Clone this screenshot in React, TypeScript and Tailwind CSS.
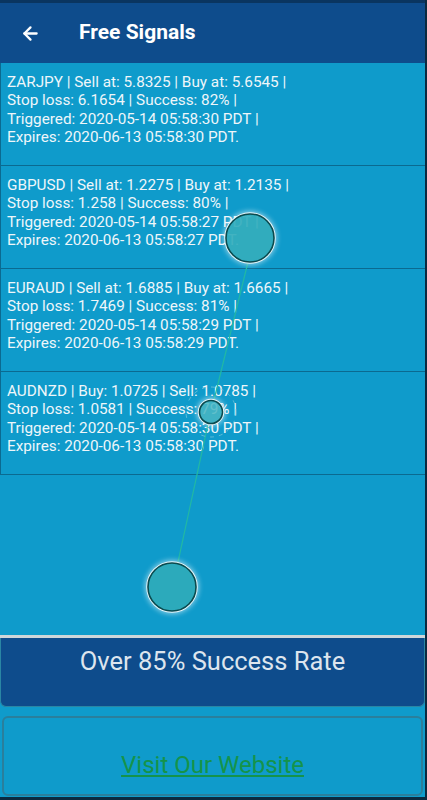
import React from "react";
import { ArrowLeft } from "lucide-react";

const signals = [
  [
    "ZARJPY | Sell at: 5.8325 | Buy at: 5.6545 |",
    "Stop loss: 6.1654 | Success: 82% |",
    "Triggered: 2020-05-14 05:58:30 PDT |",
    "Expires: 2020-06-13 05:58:30 PDT.",
  ],
  [
    "GBPUSD | Sell at: 1.2275 | Buy at: 1.2135 |",
    "Stop loss: 1.258 | Success: 80% |",
    "Triggered: 2020-05-14 05:58:27 PDT |",
    "Expires: 2020-06-13 05:58:27 PDT.",
  ],
  [
    "EURAUD | Sell at: 1.6885 | Buy at: 1.6665 |",
    "Stop loss: 1.7469 | Success: 81% |",
    "Triggered: 2020-05-14 05:58:29 PDT |",
    "Expires: 2020-06-13 05:58:29 PDT.",
  ],
  [
    "AUDNZD | Buy: 1.0725 | Sell: 1.0785 |",
    "Stop loss: 1.0581 | Success: 79% |",
    "Triggered: 2020-05-14 05:58:30 PDT |",
    "Expires: 2020-06-13 05:58:30 PDT.",
  ],
];

function TouchTrail() {
  // screen-recording touch markers drawn over the list
  return (
    <svg className="pointer-events-none absolute left-0 top-0" width="427" height="800">
      <defs>
        <filter id="glow" x="-50%" y="-50%" width="200%" height="200%">
          <feGaussianBlur stdDeviation="2.5" />
        </filter>
      </defs>
      <line x1="248" y1="262" x2="214" y2="400" stroke="#22b8a4" strokeWidth="1.2" />
      <line x1="208" y1="424" x2="178" y2="562" stroke="#22b8a4" strokeWidth="1.2" />
      <circle cx="211" cy="412" r="25" fill="none" stroke="#7fc9dd" strokeWidth="1" strokeDasharray="4 5" opacity="0.7" />
      {[
        [250, 238, 24, 0.85],
        [211, 412, 11.5, 0.7],
        [172, 587, 24, 0.9],
      ].map(([cx, cy, r, o], i) => (
        <g key={i}>
          <circle cx={cx} cy={cy} r={r + 3} fill="#ffffff" opacity="0.5" filter="url(#glow)" />
          <circle cx={cx} cy={cy} r={r + 1} fill="none" stroke="#e8f6fa" strokeWidth="1.5" />
          <circle cx={cx} cy={cy} r={r} fill="#22a6b6" fillOpacity={o} stroke="#0a4a4e" strokeWidth="1.6" />
        </g>
      ))}
    </svg>
  );
}

export default function App() {
  return (
    <div
      className="relative flex h-[800px] w-[427px] flex-col overflow-hidden border-r-2 border-b-[3px] border-[#0a2a40] bg-[#0f9bcb]"
      style={{ fontFamily: "Roboto, 'Liberation Sans', sans-serif" }}
    >
      <header className="flex h-[63px] items-center border-t-[3px] border-[#0a3560] bg-[#0e4c8c] text-white">
        <ArrowLeft size={21} strokeWidth={2.6} className="ml-[20px]" />
        <h1 className="ml-[38px] text-[21px] font-bold">Free Signals</h1>
      </header>

      <div className="flex flex-col">
        {signals.map((lines, i) => (
          <div
            key={i}
            className="h-[103px] border-b border-l border-[#0b6a90] px-[6px] pt-[10px] text-[15.3px] leading-[18.4px] text-[#eef6fa]"
          >
            {lines.map((l) => (
              <div key={l}>{l}</div>
            ))}
          </div>
        ))}
      </div>

      <div className="flex-1" />

      <div className="h-[3px] bg-[#cfd6da]" />
      <div className="flex h-[69px] justify-center rounded-b-[6px] border-x border-b border-[#2a86a4] bg-[#0e4c8c] pt-[4px]">
        <span className="text-[25.5px] text-[#dde5ee]">Over 85% Success Rate</span>
      </div>

      <div className="mx-[2px] mb-[1px] mt-[9px] flex h-[80px] items-end justify-center rounded-[6px] border-2 border-[#2a7f9c] pb-[14px]">
        <a href="#" className="text-[24px] leading-[30px] text-[#15934a] underline underline-offset-[2px]">
          Visit Our Website
        </a>
      </div>

      <TouchTrail />
    </div>
  );
}
